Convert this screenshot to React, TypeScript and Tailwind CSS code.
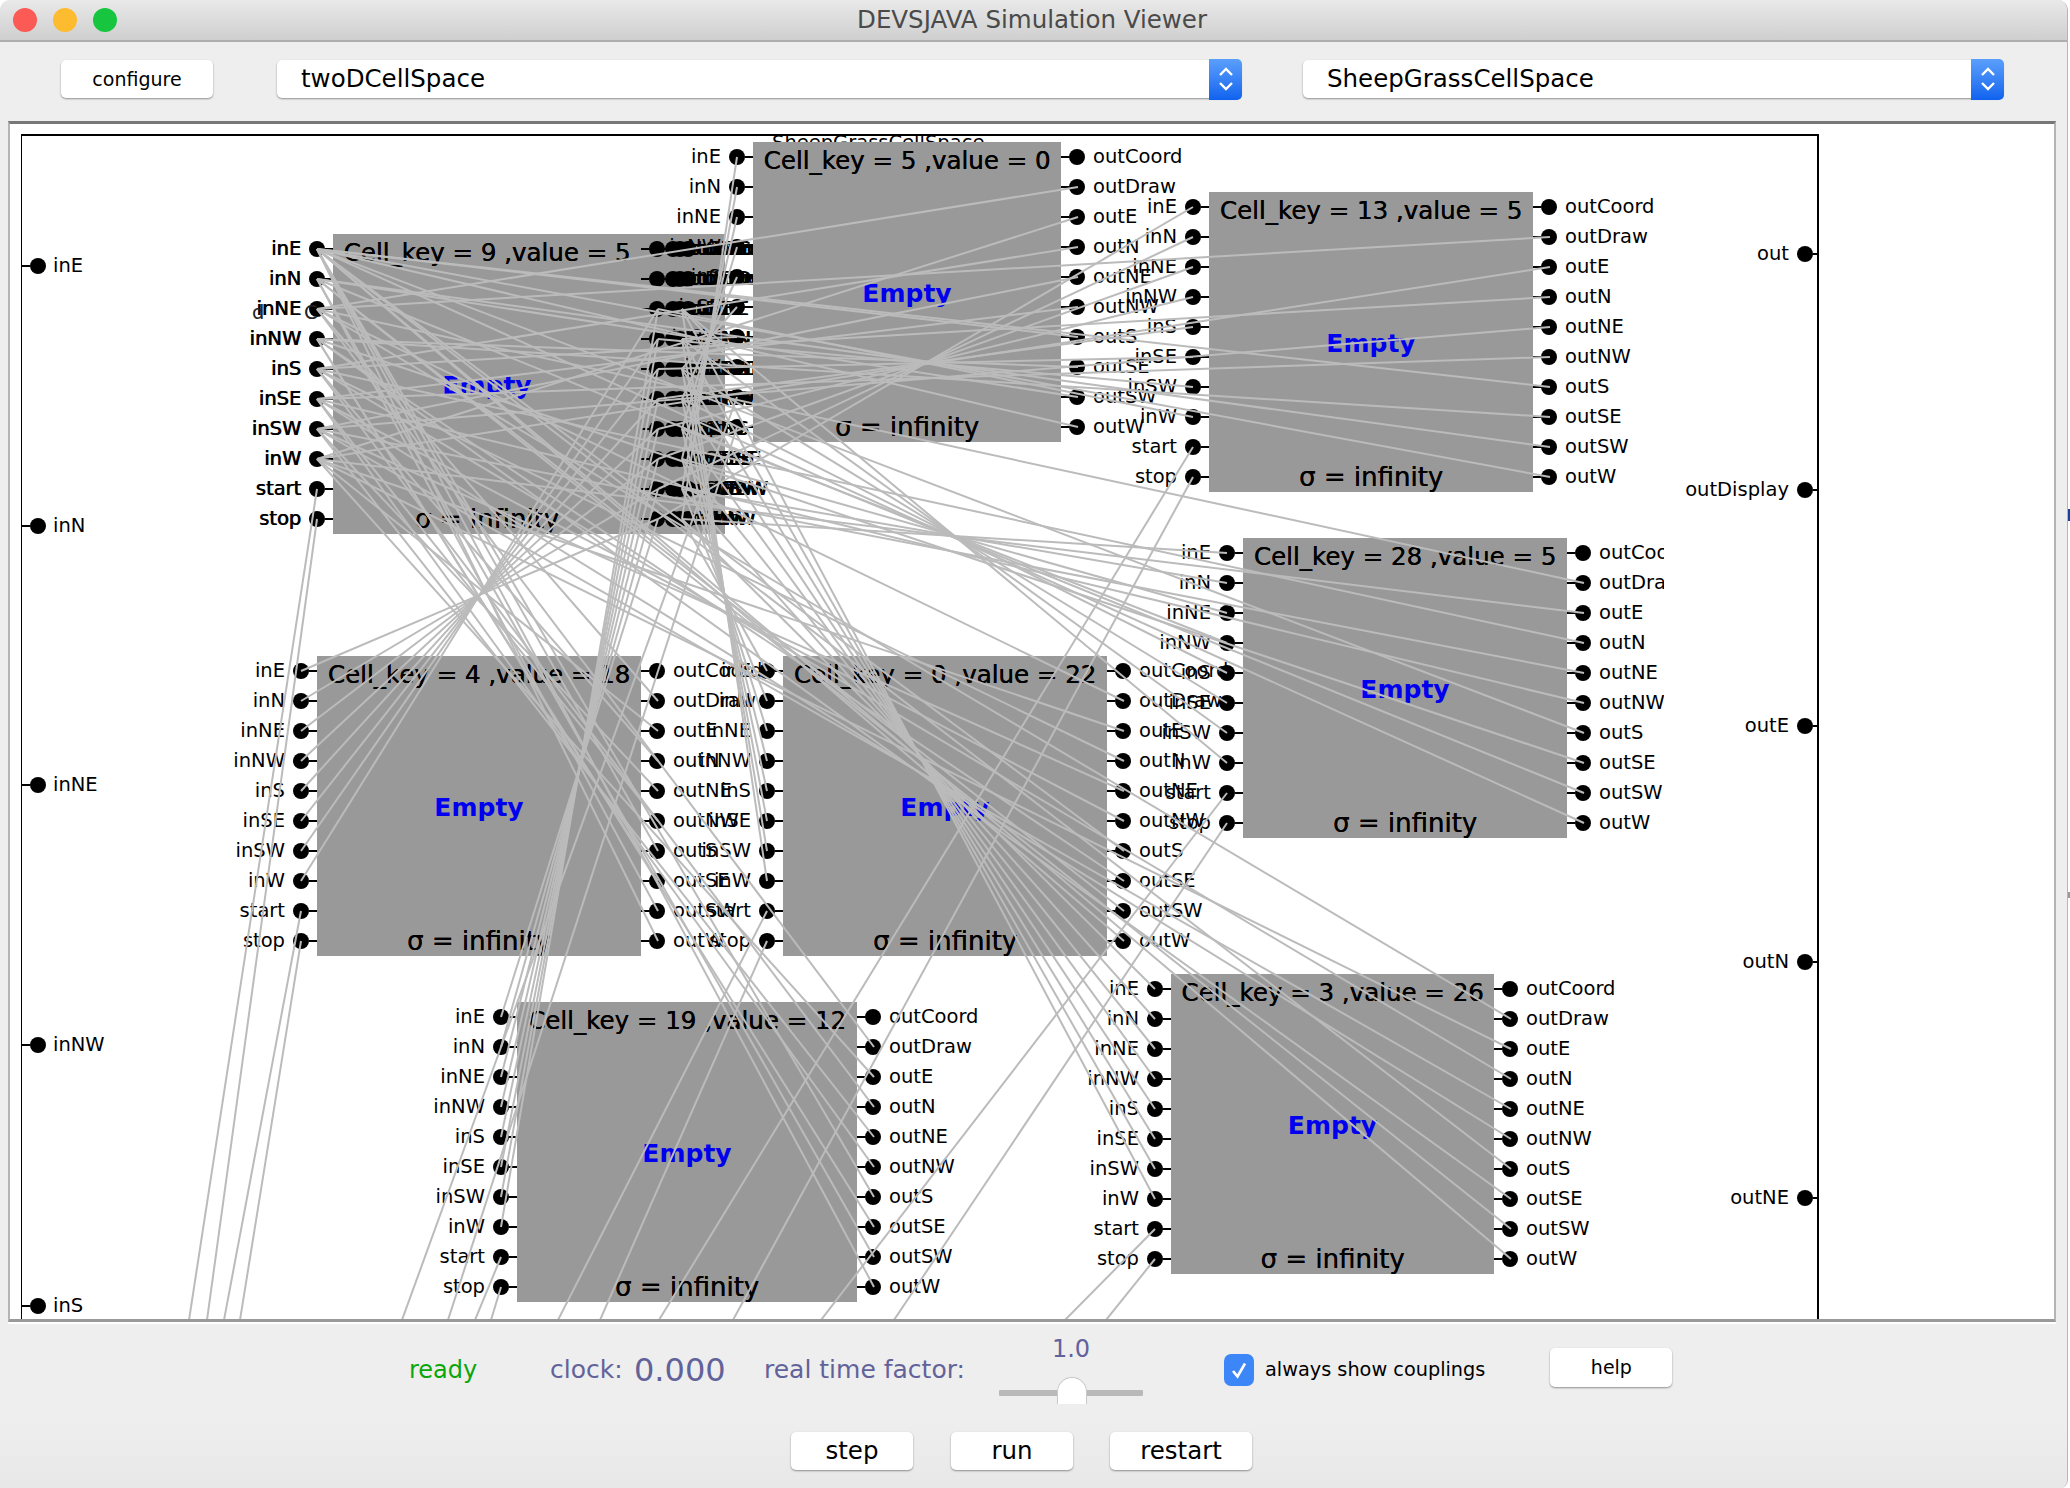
const FONT = "font-['DejaVu_Sans',sans-serif]";

// canvas content origin, all model coordinates below are page coordinates
const OX = 10;
const OY = 124;

const inPorts = ['inE', 'inN', 'inNE', 'inNW', 'inS', 'inSE', 'inSW', 'inW', 'start', 'stop'];
const outPorts = ['outCoord', 'outDraw', 'outE', 'outN', 'outNE', 'outNW', 'outS', 'outSE', 'outSW', 'outW'];

type Cell = { id: number; value: number; x: number; y: number; w: number; clip?: boolean; bold?: boolean; bottom: [number, number] };

const cells: Cell[] = [
  { id: 9, value: 5, x: 333, y: 234, w: 308, bold: true, bottom: [189, 207] },
  { id: 5, value: 0, x: 753, y: 142, w: 308, bottom: [402, 448] },
  { id: 13, value: 5, x: 1209, y: 192, w: 324, bottom: [659, 733] },
  { id: 28, value: 5, x: 1243, y: 538, w: 324, clip: true, bottom: [821, 894] },
  { id: 4, value: 18, x: 317, y: 656, w: 324, bottom: [224, 240] },
  { id: 0, value: 22, x: 783, y: 656, w: 324, bottom: [558, 600] },
  { id: 19, value: 12, x: 517, y: 1002, w: 340, bottom: [475, 491] },
  { id: 3, value: 26, x: 1171, y: 974, w: 323, bottom: [1065, 1106] },
];

const outToCenter = [2, 7, 4, 6, 5, 0, 3, 1, 0];
const inToCenter = [9, 8, 7, 6, 5, 4, 3, 2];

function couplings() {
  const hub = cells[0];
  const lines: number[][] = [];
  const rowY = (c: Cell, i: number) => c.y + 15 + 30 * i;
  cells.forEach((c, n) => {
    const inX = c.x - 16;
    const outX = c.x + c.w + 17;
    lines.push([inX, rowY(c, 8), c.bottom[0], 1320]);
    lines.push([inX, rowY(c, 9), c.bottom[1], 1320]);
    if (c === hub) return;
    const hubOut = n % 2 === 0 ? 658 : 682;
    outToCenter.forEach((t, i) => lines.push([outX, rowY(c, i + 1), hub.x - 16, rowY(hub, t)]));
    inToCenter.forEach((t, i) => lines.push([inX, rowY(c, i), hubOut, rowY(hub, t)]));
  });
  return lines;
}

function InRow({ name, bold }: { name: string; bold?: boolean }) {
  return (
    <div className="h-[30px] flex items-center justify-end">
      <span className={`text-[19.5px] text-black whitespace-nowrap mr-2 ${bold ? '[text-shadow:0.7px_0_0_#000]' : ''}`}>{name}</span>
      <span className="w-[16px] h-[16px] rounded-full bg-black shrink-0" />
      <span className="w-[8px] h-[2px] bg-black shrink-0" />
    </div>
  );
}

function OutRow({ name, clip }: { name: string; clip?: boolean }) {
  return (
    <div className="h-[30px] flex items-center">
      <span className="w-[8px] h-[2px] bg-black shrink-0" />
      <span className="w-[16px] h-[16px] rounded-full bg-black shrink-0" />
      <span className={`text-[19.5px] text-black whitespace-nowrap ml-2 ${clip ? 'max-w-[65px] overflow-hidden' : ''}`}>{name}</span>
    </div>
  );
}

function CellBlock({ cell }: { cell: Cell }) {
  return (
    <div className="absolute h-[300px] bg-[#999999] flex flex-col items-center" style={{ left: cell.x - OX, top: cell.y - OY, width: cell.w }}>
      <div className="absolute right-full top-0 flex flex-col">
        {inPorts.map(p => <InRow key={p} name={p} bold={cell.bold} />)}
      </div>
      <div className="absolute left-full top-0 flex flex-col">
        {outPorts.map(p => <OutRow key={p} name={p} clip={cell.clip} />)}
      </div>
      <div className="mt-1 h-[30px] leading-[30px] text-[24.5px] text-black whitespace-nowrap [text-shadow:0.4px_0_0_#000]">
        Cell_key = {cell.id} ,value = {cell.value}
      </div>
      <div className="flex-1 flex items-center text-[25px] font-bold text-[#0000ee]">Empty</div>
      <div className="h-[30px] leading-[30px] text-[26px] text-black whitespace-nowrap [text-shadow:0.4px_0_0_#000]">σ = infinity</div>
    </div>
  );
}

// extra out ports stacked under cell 9, they make the black smear next to it
function GhostPorts({ x }: { x: number }) {
  return (
    <div className="absolute flex flex-col [text-shadow:1px_0_0_#000]" style={{ left: x - OX, top: 234 - OY }}>
      {outPorts.map(p => <OutRow key={p} name={p} />)}
    </div>
  );
}

function Canvas() {
  const lines = couplings();
  return (
    <div className="relative h-[1201px] shrink-0 ml-2 mr-[11px] bg-white overflow-hidden shadow-[0_2px_0_#ffffff] border-t-[3px] border-t-[#777777] border-l-2 border-l-[#b4b4b4] border-r-2 border-r-[#b4b4b4] border-b-[3px] border-b-[#999999]">
      <div className="absolute left-[11px] top-[10px] w-[1798px] h-[1300px] border-t-2 border-r-2 border-l border-black" />

      {[['inE', 266], ['inN', 526], ['inNE', 785], ['inNW', 1045], ['inS', 1306]].map(([name, y]) => (
        <div key={name} className="absolute flex items-center h-[30px]" style={{ left: 12, top: Number(y) - OY - 15 }}>
          <span className="w-[8px] h-[2px] bg-black" />
          <span className="w-[16px] h-[16px] rounded-full bg-black" />
          <span className="ml-[7px] text-[19.5px] text-black">{name}</span>
        </div>
      ))}
      {[['out', 254], ['outDisplay', 490], ['outE', 726], ['outN', 962], ['outNE', 1198]].map(([name, y]) => (
        <div key={name} className="absolute flex items-center h-[30px]" style={{ right: 2055 - 1820, top: Number(y) - OY - 15 }}>
          <span className="mr-[8px] text-[19.5px] text-black">{name}</span>
          <span className="w-[16px] h-[16px] rounded-full bg-black" />
          <span className="w-[6px] h-[2px] bg-black" />
        </div>
      ))}

      <div className="absolute left-[762px] top-[4px] text-[19.5px] text-black whitespace-nowrap">SheepGrassCellSpace</div>

      <div className="absolute left-[391px] top-[110px] w-[324px] h-[300px] bg-[#999999]" />
      <GhostPorts x={657} />
      <GhostPorts x={664} />
      <GhostPorts x={672} />
      {cells.map(c => <CellBlock key={c.id} cell={c} />)}
      <span className="absolute left-[242px] top-[174px] text-[19.5px] text-[#222]">d</span>
      <span className="absolute left-[294px] top-[174px] text-[19.5px] text-[#222]">C</span>

      <svg className="absolute left-0 top-0 pointer-events-none" width="2045" height="1196" viewBox={`${OX} ${OY} 2045 1196`}>
        {lines.map((l, i) => (
          <line key={i} x1={l[0]} y1={l[1]} x2={l[2]} y2={l[3]} stroke="#bbbbbb" strokeWidth="2" />
        ))}
      </svg>
    </div>
  );
}

function Button({ label, className }: { label: string; className: string }) {
  return (
    <button className={`bg-white rounded-[5px] text-black flex items-center justify-center shadow-[0_1px_2px_rgba(0,0,0,0.4)] ${className}`}>
      {label}
    </button>
  );
}

function Combo({ label, className }: { label: string; className: string }) {
  return (
    <div className={`h-[38px] bg-white rounded-[5px] flex items-center justify-between shadow-[0_1px_2px_rgba(0,0,0,0.4)] ${className}`}>
      <span className="pl-6 text-[24.5px] text-black">{label}</span>
      <span className="w-[33px] h-[41px] -mr-px rounded-r-[5px] bg-gradient-to-b from-[#5b9ffb] to-[#0f62ee] flex items-center justify-center">
        <svg width="16" height="28" viewBox="0 0 16 28" fill="none" stroke="white" strokeWidth="2.4">
          <path d="M2 10 L8 4 L14 10" />
          <path d="M2 18 L8 24 L14 18" />
        </svg>
      </span>
    </div>
  );
}

export default function App() {
  return (
    <div className={`relative w-[2070px] h-[1488px] bg-white overflow-hidden ${FONT}`}>
      <div className="w-[2068px] h-[1488px] flex flex-col rounded-t-[10px] rounded-br-[8px] overflow-hidden bg-[#eeeeee] border-r border-r-[#b5b5b5]">
        {/* title bar */}
        <div className="relative h-[42px] shrink-0 flex items-center justify-center pr-[3px] bg-gradient-to-b from-[#e9e9e9] to-[#cfcfcf] border-b-2 border-b-[#aeaeae]">
          <div className="absolute left-[13px] top-[8px] flex gap-[16px]">
            <span className="w-[24px] h-[24px] rounded-full bg-[#fb5a55]" />
            <span className="w-[24px] h-[24px] rounded-full bg-[#fdbb2f]" />
            <span className="w-[24px] h-[24px] rounded-full bg-[#17c63e]" />
          </div>
          <span className="text-[24.5px] text-[#4a4a4a]">DEVSJAVA Simulation Viewer</span>
        </div>

        {/* toolbar */}
        <div className="h-[79px] shrink-0 pl-[61px] pt-[18px] flex items-start">
          <Button label="configure" className="w-[152px] h-[38px] text-[19px]" />
          <Combo label="twoDCellSpace" className="ml-[64px] w-[964px]" />
          <Combo label="SheepGrassCellSpace" className="ml-[62px] w-[700px]" />
        </div>

        <Canvas />

        {/* controls */}
        <div className="flex-1 pt-[14px] bg-gradient-to-b from-[#eeeeee] from-60% to-[#e8e8e8]">
          <div className="h-[68px] pl-[409px] flex items-center">
            <span className="w-[66px] text-[24px] text-[#0aa60a]">ready</span>
            <span className="ml-[75px] w-[72px] text-[25px] whitespace-nowrap text-[#62629a]">clock:</span>
            <span className="ml-[12px] w-[88px] text-[32px] text-[#62629a]">0.000</span>
            <span className="ml-[42px] w-[199px] text-[25px] whitespace-nowrap text-[#62629a]">real time factor:</span>
            <div className="ml-[36px] w-[144px] flex flex-col items-center">
              <span className="h-[26px] leading-[26px] text-[24px] text-[#62629a]">1.0</span>
              <div className="relative mt-[15px] w-full h-[27px]">
                <div className="absolute left-0 right-0 top-[13px] h-[6px] bg-[#b9b9b9] rounded-[1px]" />
                <div className="absolute left-[58px] top-0 w-[30px] h-[27px] rounded-t-full bg-white border border-b-0 border-[#c8c8c8]" />
              </div>
            </div>
            <span className="ml-[81px] w-[30px] h-[32px] rounded-[7px] bg-[#3d86f7] flex items-center justify-center">
              <svg width="18" height="20" viewBox="0 0 18 20" fill="none" stroke="white" strokeWidth="2.6">
                <path d="M3 11 L7.5 16.5 L15 3.5" />
              </svg>
            </span>
            <span className="ml-[11px] text-[19.3px] text-black whitespace-nowrap">always show couplings</span>
            <Button label="help" className="ml-[65px] mb-[5px] w-[122px] h-[39px] text-[19px]" />
          </div>
          <div className="mt-[28px] pl-[791px] flex">
            <Button label="step" className="w-[122px] h-[38px] text-[24.5px]" />
            <Button label="run" className="ml-[38px] w-[122px] h-[38px] text-[24.5px]" />
            <Button label="restart" className="ml-[37px] w-[142px] h-[38px] text-[24.5px]" />
          </div>
        </div>
      </div>
      <span className="absolute left-[2068px] top-[509px] w-[2px] h-[12px] bg-[#1d3f9c]" />
      <span className="absolute left-[2068px] top-[892px] w-[2px] h-[6px] bg-[#999999]" />
    </div>
  );
}
